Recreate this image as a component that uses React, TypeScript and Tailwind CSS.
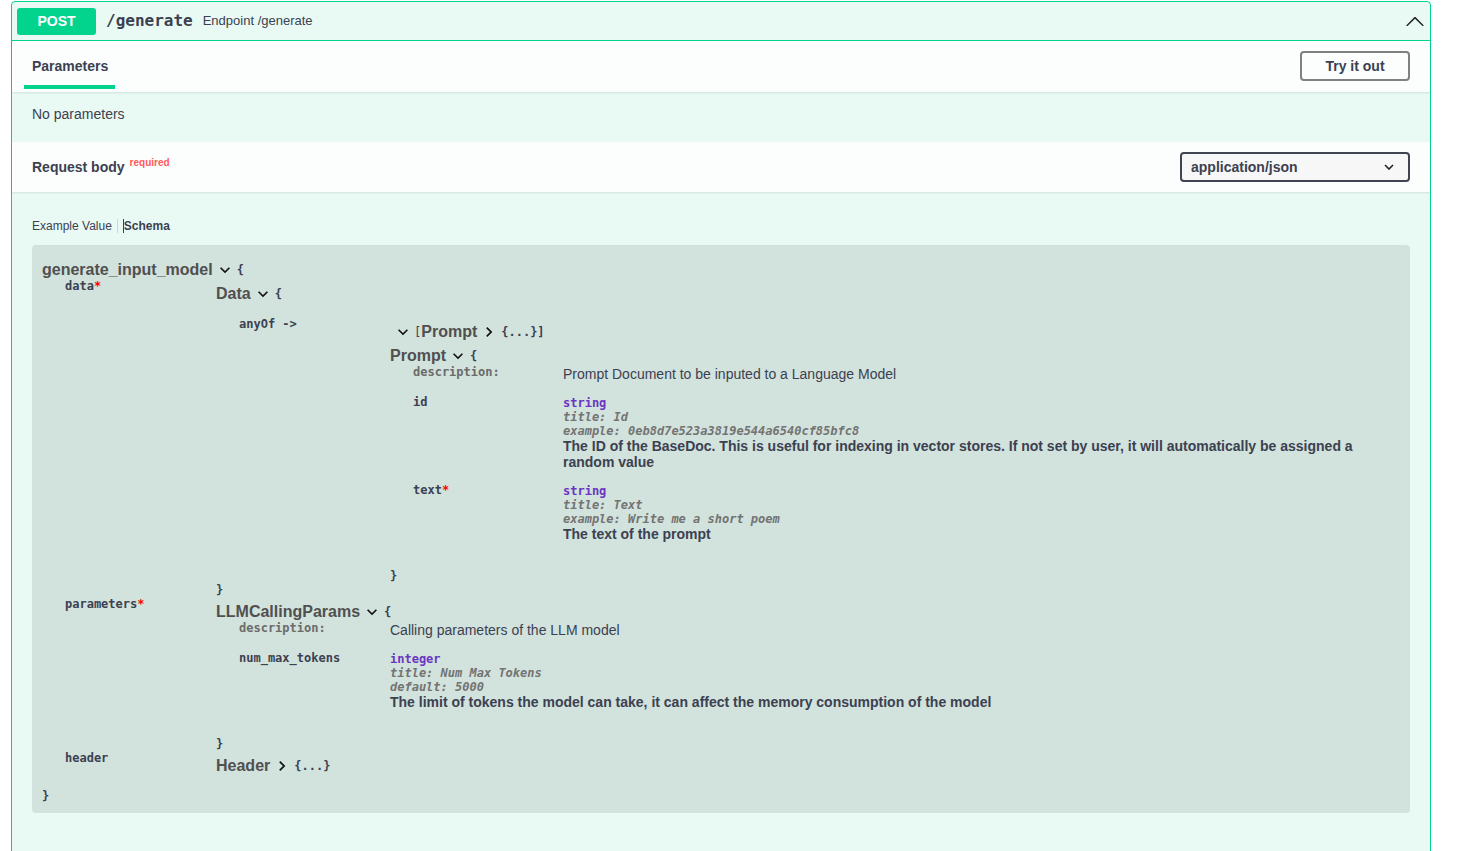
import React from "react";

function Chevron({ down }: { down?: boolean }) {
  return (
    <svg viewBox="0 0 24 24" className={down ? "w-5 h-5 shrink-0 rotate-90" : "w-5 h-5 shrink-0"}>
      <path d="M10 6L8.59 7.41 13.17 12l-4.58 4.59L10 18l6-6z" fill="#111" />
    </svg>
  );
}

function Brace({ children, className = "" }: { children: React.ReactNode; className?: string }) {
  return (
    <span className={"font-['DejaVu_Sans_Mono',monospace] text-[12px] font-bold leading-[14px] text-[#3b4151] " + className}>
      {children}
    </span>
  );
}

function CloseBrace({ className = "" }: { className?: string }) {
  return (
    <div className={"font-['DejaVu_Sans_Mono',monospace] text-[12px] font-bold leading-[14px] h-[14px] text-[#3b4151] " + className}>
      {"}"}
    </div>
  );
}

function TitleLine({ title, open }: { title: string; open: boolean }) {
  return (
    <div className="flex items-center h-5">
      <span className="text-[16px] font-bold leading-5 text-[#505050]">{title}</span>
      <span className="ml-[2px] flex">
        <Chevron down={open} />
      </span>
      <Brace className="ml-[2px]">{open ? "{" : "{...}"}</Brace>
    </div>
  );
}

function Name({ children, req, gray, wide = true }: { children: React.ReactNode; req?: boolean; gray?: boolean; wide?: boolean }) {
  return (
    <div
      className={
        (wide ? "w-[174px] " : "w-[173px] ") +
        "shrink-0 pl-[23px] font-['DejaVu_Sans_Mono',monospace] text-[12px] font-bold leading-3 " +
        (gray ? "text-[#6b6b6b]" : "text-[#3b4151]")
      }
    >
      {children}
      {req && <span className="text-[#ff0000]">*</span>}
    </div>
  );
}

function Prim({
  type,
  title,
  exLabel,
  ex,
  desc,
}: {
  type: string;
  title: string;
  exLabel: string;
  ex: string;
  desc: string;
}) {
  return (
    <div className="flex-1 min-w-0 pb-[14px]">
      <div className="font-['DejaVu_Sans_Mono',monospace] text-[12px] font-bold leading-[14px] text-[#6a35c2]">{type}</div>
      <div className="font-['DejaVu_Sans_Mono',monospace] text-[12px] font-bold italic leading-[14px] text-[#737373]">
        title: {title}
      </div>
      <div className="font-['DejaVu_Sans_Mono',monospace] text-[12px] font-bold italic leading-[14px] text-[#737373]">
        {exLabel}: {ex}
      </div>
      <div className="text-[14px] font-bold leading-4 text-[#3b4151]">{desc}</div>
    </div>
  );
}

function DescRow({ text, wide = true }: { text: string; wide?: boolean }) {
  return (
    <div className="flex">
      <Name gray wide={wide}>
        description:
      </Name>
      <div className="flex-1 min-w-0 pb-[14px] text-[14px] leading-4 text-[#3b4151]">{text}</div>
    </div>
  );
}

function ArrowUp() {
  return (
    <svg viewBox="0 0 20 20" className="w-5 h-5" fill="#222">
      <path d="M17.418 14.908c.272.268.709.268.979 0 .27-.268.271-.701 0-.969l-7.908-7.83c-.27-.268-.707-.268-.979 0l-7.908 7.83c-.27.268-.27.701 0 .969.271.268.709.268.979 0L10 7.767l7.418 7.141z" />
    </svg>
  );
}

export default function App() {
  return (
    <div className="h-[851px] overflow-hidden bg-white pt-px font-['Liberation_Sans',Arial,sans-serif] text-[#3b4151]">
      <div className="ml-[11px] w-[1420px] border border-[#02d48e] rounded-[4px] bg-[#e9faf4]">
        {/* Summary */}
        <div className="flex items-center h-[39px] px-[5px] border-b border-[#02d48e]">
          <div className="w-[79px] h-[27px] rounded-[3px] bg-[#02d48e] text-white text-[14px] font-bold flex items-center justify-center">
            POST
          </div>
          <span className="ml-[10px] font-['DejaVu_Sans_Mono',monospace] text-[16px] font-bold text-[#3b4151]">/generate</span>
          <span className="ml-[10px] text-[13px] text-[#3b4151]">Endpoint /generate</span>
          <div className="ml-auto flex">
            <ArrowUp />
          </div>
        </div>

        {/* Tab header */}
        <div className="h-[51px] flex items-start justify-between px-5 bg-[#fbfefd] shadow-[0_1px_2px_rgba(0,0,0,0.1)]">
          <div className="flex flex-col pt-[15px]">
            <span className="text-[14px] font-bold leading-5 text-[#3b4151]">Parameters</span>
            <div className="mt-[9px] -ml-2 w-[91px] h-1 bg-[#02d48e]" />
          </div>
          <button className="mt-[10px] w-[110px] h-[30px] border-2 border-[#808080] rounded-[4px] text-[14px] font-bold text-[#3b4151] flex items-center justify-center">
            Try it out
          </button>
        </div>

        {/* No parameters */}
        <div className="h-[50px] px-5 pt-[14px] text-[14px] leading-4 text-[#3b4151]">No parameters</div>

        {/* Request body header */}
        <div className="h-[50px] flex items-center justify-between px-5 bg-[#fbfefd] shadow-[0_1px_2px_rgba(0,0,0,0.1)]">
          <div className="flex items-start">
            <span className="text-[14px] font-bold leading-5 text-[#3b4151]">Request body</span>
            <span className="ml-[5px] text-[10px] font-bold leading-3 text-[#ff5a5a]">required</span>
          </div>
          <div className="w-[230px] h-[30px] border-2 border-[#41444e] rounded-[4px] bg-[#f7f7f7] flex items-center justify-between pl-[9px] pr-[14px] text-[14px] font-bold text-[#3b4151]">
            <span>application/json</span>
            <svg viewBox="0 0 10 6" className="w-[10px] h-[6px]">
              <path d="M1 1l4 4 4-4" fill="none" stroke="#222" strokeWidth="1.6" />
            </svg>
          </div>
        </div>

        {/* Body */}
        <div className="px-5 pt-[27px] pb-[60px]">
          <div className="flex items-center h-[14px] text-[12px] leading-[14px]">
            <span className="text-[#3b4151]">Example Value</span>
            <span className="ml-[5px] w-px h-[14px] bg-[#cfd6d3]" />
            <span className="ml-[5px] border-l border-[#3b4151] font-bold text-[#3b4151]">Schema</span>
          </div>

          <div className="mt-[12px] bg-[#d2e2dc] rounded-[4px] pt-[15px] pb-[10px] px-[10px]">
            <TitleLine title="generate_input_model" open />

            {/* data row */}
            <div className="flex">
              <Name req>data</Name>
              <div className="flex-1 min-w-0 pt-1">
                <TitleLine title="Data" open />
                <div className="flex mt-[14px]">
                  <Name>anyOf -&gt;</Name>
                  <div className="flex-1 min-w-0 pt-1">
                    <div className="flex items-center h-5 pl-[3px]">
                      <Chevron down />
                      <Brace className="ml-[1px] font-normal">[</Brace>
                      <span className="text-[16px] font-bold leading-5 text-[#505050]">Prompt</span>
                      <span className="ml-[2px] flex">
                        <Chevron />
                      </span>
                      <Brace className="ml-[2px]">{"{...}]"}</Brace>
                    </div>
                    <div className="mt-1">
                      <TitleLine title="Prompt" open />
                    </div>
                    <DescRow wide={false} text="Prompt Document to be inputed to a Language Model" />
                    <div className="flex">
                      <Name wide={false}>id</Name>
                      <Prim
                        type="string"
                        title="Id"
                        exLabel="example"
                        ex="0eb8d7e523a3819e544a6540cf85bfc8"
                        desc="The ID of the BaseDoc. This is useful for indexing in vector stores. If not set by user, it will automatically be assigned a random value"
                      />
                    </div>
                    <div className="flex">
                      <Name wide={false} req>
                        text
                      </Name>
                      <Prim type="string" title="Text" exLabel="example" ex="Write me a short poem" desc="The text of the prompt" />
                    </div>
                    <CloseBrace className="mt-[13px]" />
                  </div>
                </div>
                <CloseBrace />
              </div>
            </div>

            {/* parameters row */}
            <div className="flex mt-px">
              <Name req>parameters</Name>
              <div className="flex-1 min-w-0 pt-1">
                <TitleLine title="LLMCallingParams" open />
                <DescRow text="Calling parameters of the LLM model" />
                <div className="flex">
                  <Name>num_max_tokens</Name>
                  <Prim
                    type="integer"
                    title="Num Max Tokens"
                    exLabel="default"
                    ex="5000"
                    desc="The limit of tokens the model can take, it can affect the memory consumption of the model"
                  />
                </div>
                <CloseBrace className="mt-[13px]" />
              </div>
            </div>

            {/* header row */}
            <div className="flex mt-px">
              <Name>header</Name>
              <div className="flex-1 min-w-0 pt-1">
                <TitleLine title="Header" open={false} />
              </div>
            </div>

            <CloseBrace className="mt-[13px]" />
          </div>
        </div>
      </div>
    </div>
  );
}
